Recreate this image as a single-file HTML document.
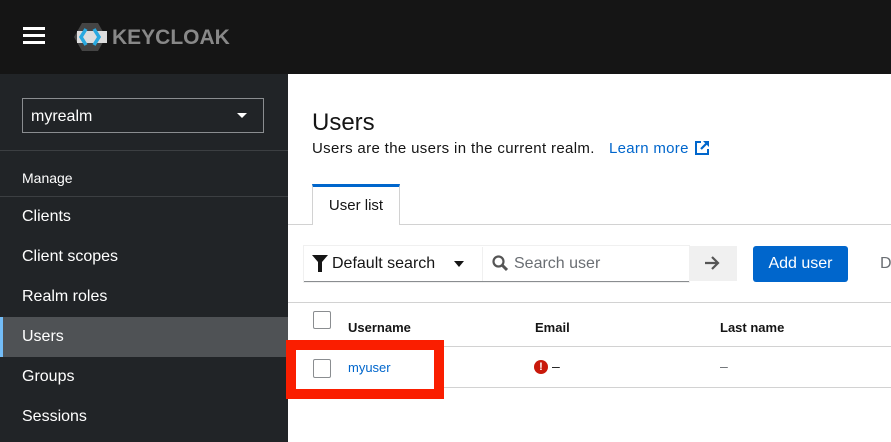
<!DOCTYPE html>
<html><head><style>
body{margin:0;width:891px;height:442px;overflow:hidden;font-family:"Liberation Sans",sans-serif;background:#fff;position:relative}
.a{position:absolute}
.hdr{left:0;top:0;width:891px;height:74px;background:#151515}
.side{left:0;top:74px;width:288px;height:368px;background:#212427}
.nav{left:0;width:288px;color:#fff;font-size:16px;padding-left:22px;box-sizing:border-box}
</style></head><body>
<div class="a hdr"></div>
<div class="a" style="left:23px;top:27px;width:22px;height:3px;background:#fff;box-shadow:0 7px 0 #fff,0 14px 0 #fff"></div>
<svg class="a" style="left:74px;top:20px" width="160" height="34">
<polygon points="8,3 24,3 32,17 24,31 8,31 0,17" fill="#444"/>
<rect x="3" y="11" width="30" height="12" fill="#ddd"/>
<path d="M12,9 L7,17 L12,25 M20,9 L25,17 L20,25" stroke="#29a9e0" stroke-width="3.5" fill="none"/>
<text x="38" y="24" font-family="Liberation Sans" font-weight="bold" font-size="21" fill="#888">KEYCLOAK</text>
</svg>
<div class="a side"></div>
<div class="a" style="left:22px;top:98px;width:242px;height:35px;border:1px solid #8a8d90;box-sizing:border-box;color:#fff;font-size:16px;line-height:35px;padding-left:8px">myrealm<span style="position:absolute;right:16px;top:14px;border-left:5px solid transparent;border-right:5px solid transparent;border-top:5px solid #fff"></span></div>
<div class="a" style="left:0;top:150px;width:288px;height:1px;background:#3c3f42"></div>
<div class="a nav" style="top:170px;font-size:14px">Manage</div>
<div class="a" style="left:0;top:196px;width:288px;height:1px;background:#3c3f42"></div>
<div class="a nav" style="top:208px">Clients</div>
<div class="a nav" style="top:248px">Client scopes</div>
<div class="a nav" style="top:288px">Realm roles</div>
<div class="a" style="left:0;top:317px;width:288px;height:40px;background:#4f5255;border-left:3px solid #73bcf7;box-sizing:border-box"></div>
<div class="a nav" style="top:328px">Users</div>
<div class="a nav" style="top:368px">Groups</div>
<div class="a nav" style="top:408px">Sessions</div>

<div class="a" style="left:312px;top:109px;font-size:24px;color:#151515">Users</div>
<div class="a" style="left:312px;top:140px;font-size:15px;letter-spacing:0.35px;color:#151515">Users are the users in the current realm.</div>
<div class="a" style="left:609px;top:140px;font-size:15px;letter-spacing:0.3px;color:#0066cc">Learn more</div>
<svg class="a" style="left:694px;top:140px" width="16" height="16"><path d="M7,2H2V14H14V9" stroke="#0066cc" stroke-width="2" fill="none"/><path d="M9,1H15V7Z" fill="#0066cc"/><path d="M14,2L7,9" stroke="#0066cc" stroke-width="2.2"/></svg>
<div class="a" style="left:288px;top:224px;width:603px;height:1px;background:#d2d2d2"></div>
<div class="a" style="left:312px;top:184px;width:88px;height:41px;border:1px solid #d2d2d2;border-top:3px solid #0066cc;border-bottom:none;background:#fff;box-sizing:border-box;font-size:15px;text-align:center;line-height:38px;color:#151515">User list</div>

<div class="a" style="left:304px;top:246px;width:385px;height:35px;border-bottom:1px solid #8a8d90;box-shadow:0 0 0 1px #f0f0f0"></div>
<svg class="a" style="left:312px;top:255px" width="16" height="17"><path d="M0,0H16L10,7V17H6V7Z" fill="#151515"/></svg>
<div class="a" style="left:332px;top:255px;font-size:16px;color:#151515">Default search</div>
<div class="a" style="left:454px;top:261px;border-left:5px solid transparent;border-right:5px solid transparent;border-top:6px solid #151515"></div>
<div class="a" style="left:482px;top:247px;width:1px;height:34px;background:#f0f0f0"></div>
<svg class="a" style="left:492px;top:255px" width="16" height="17"><circle cx="6.5" cy="6.5" r="5" stroke="#555" stroke-width="2.2" fill="none"/><path d="M10,10L15,15" stroke="#555" stroke-width="3"/></svg>
<div class="a" style="left:514px;top:255px;font-size:16px;color:#6a6e73">Search user</div>
<div class="a" style="left:689px;top:246px;width:48px;height:35px;background:#f0f0f0"></div>
<svg class="a" style="left:704px;top:256px" width="16" height="14"><path d="M1,7H14M8,1L14,7L8,13" stroke="#555" stroke-width="2.2" fill="none"/></svg>
<div class="a" style="left:753px;top:246px;width:95px;height:36px;background:#0066cc;border-radius:3px;color:#fff;font-size:16px;text-align:center;line-height:36px">Add user</div>
<div class="a" style="left:880px;top:255px;font-size:16px;color:#6a6e73">D</div>

<div class="a" style="left:288px;top:302px;width:603px;height:1px;background:#d2d2d2"></div>
<div class="a" style="left:313px;top:311px;width:18px;height:18px;border:1px solid #8a8d90;border-radius:2px;box-sizing:border-box"></div>
<div class="a" style="left:348px;top:320px;font-size:13px;font-weight:bold;color:#151515">Username</div>
<div class="a" style="left:535px;top:320px;font-size:13px;font-weight:bold;color:#151515">Email</div>
<div class="a" style="left:720px;top:320px;font-size:13px;font-weight:bold;color:#151515">Last name</div>
<div class="a" style="left:288px;top:346px;width:603px;height:1px;background:#d2d2d2"></div>
<div class="a" style="left:288px;top:387px;width:603px;height:1px;background:#d2d2d2"></div>
<div class="a" style="left:534px;top:360px;width:14px;height:14px;border-radius:50%;background:#c9190b;color:#fff;font-size:11px;font-weight:bold;text-align:center;line-height:14px">!</div>
<div class="a" style="left:552px;top:358px;font-size:14px;color:#151515">–</div>
<div class="a" style="left:720px;top:358px;font-size:14px;color:#6a6e73">–</div>
<div class="a" style="left:286px;top:340px;width:158px;height:59px;border:10px solid #fa1e00;box-sizing:border-box;background:#fff"></div>
<div class="a" style="left:313px;top:359px;width:18px;height:19px;border:1px solid #8a8d90;border-radius:2px;box-sizing:border-box"></div>
<div class="a" style="left:348px;top:360px;font-size:13px;color:#0066cc">myuser</div>
</body></html>
